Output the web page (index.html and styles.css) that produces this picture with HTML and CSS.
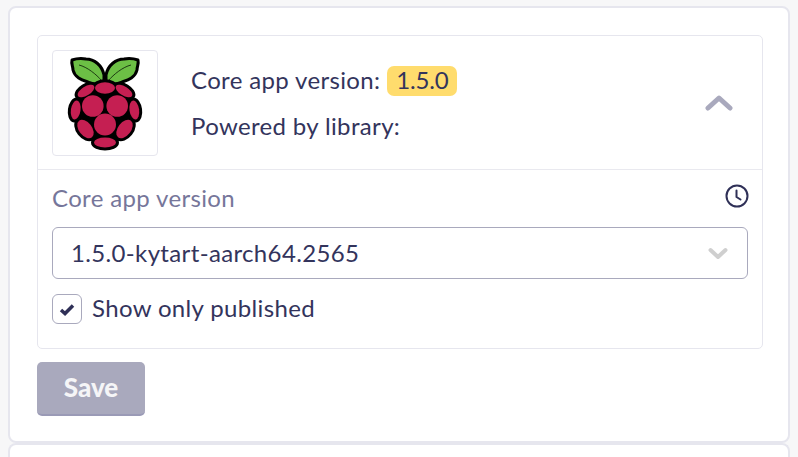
FILE: index.html
```html
<!DOCTYPE html>
<html lang="en">
<head>
<meta charset="utf-8">
<title>Core app version</title>
<link rel="stylesheet" href="styles.css">
</head>
<body>
<section class="card">
  <div class="panel">
    <div class="summary">
      <div class="logo">
        <svg width="104" height="104" viewBox="1 1 104 104" aria-hidden="true">
          <defs>
            <g id="berries">
              <ellipse cx="53" cy="38" rx="10" ry="5.700"/>
              <ellipse cx="34" cy="41" rx="9.500" ry="4.500" transform="rotate(-32 34 41)"/>
              <ellipse cx="72" cy="41" rx="9.500" ry="4.500" transform="rotate(32 72 41)"/>
              <circle cx="40.800" cy="56" r="10.800"/>
              <circle cx="65.200" cy="56" r="10.800"/>
              <ellipse cx="23.700" cy="60" rx="4.800" ry="9.500" transform="rotate(8 23.700 60)"/>
              <ellipse cx="82.300" cy="60" rx="4.800" ry="9.500" transform="rotate(-8 82.300 60)"/>
              <circle cx="53" cy="74.500" r="11"/>
              <ellipse cx="33.500" cy="79" rx="6.500" ry="10.500" transform="rotate(-38 33.500 79)"/>
              <ellipse cx="72.500" cy="79" rx="6.500" ry="10.500" transform="rotate(38 72.500 79)"/>
              <ellipse cx="53" cy="92.500" rx="11" ry="5"/>
            </g>
          </defs>
          <g stroke="#000" stroke-width="3" stroke-linejoin="round">
            <path class="leaf" d="M52 25C50 15 42 9 34 9C28 8 23 9 20 10C19 14 21 16 21 20C23 28 30 30 36 32C42 35 47 35 52 32Z"/>
            <path class="leaf" d="M54 25C56 15 64 9 72 9C78 8 83 9 86 10C87 14 85 16 85 20C83 28 76 30 70 32C64 35 59 35 54 32Z"/>
          </g>
          <path d="M27 15C35 17 44 24 50 31M79 15C71 17 62 24 56 31" stroke="#1d3a12" stroke-width="1" fill="none"/>
          <path d="M53 27L48 34H58Z" fill="#000"/>
          <path d="M53 32L74 38 85 60 74 84 53 96 32 84 21 60 32 38Z" fill="#000"/>
          <use href="#berries" class="berry-outline"/>
          <use href="#berries" class="berry"/>
        </svg>
      </div>
      <div class="facts">
        <p class="fact">Core app version: <span class="badge">1.5.0</span></p>
        <p class="fact">Powered by library:</p>
      </div>
      <svg class="collapse" width="30" height="18" viewBox="0 0 30 18" aria-hidden="true">
        <path d="M4 15L15 5 26 15" fill="none" stroke="#a9a9bd" stroke-width="5" stroke-linecap="round" stroke-linejoin="round"/>
      </svg>
    </div>
    <div class="details">
      <div class="label-row">
        <span class="label">Core app version</span>
        <svg class="clock" width="24" height="24" viewBox="0 0 24 24" aria-hidden="true">
          <circle cx="12" cy="12" r="10.500" fill="none" stroke="#2f3057" stroke-width="2"/>
          <path d="M11.500 6.500V13L15.500 15.500" fill="none" stroke="#2f3057" stroke-width="2" stroke-linecap="round" stroke-linejoin="round"/>
        </svg>
      </div>
      <div class="select">
        <span class="select-value">1.5.0-kytart-aarch64.2565</span>
        <svg width="20" height="13" viewBox="0 0 20 13" aria-hidden="true">
          <path d="M2.500 3L10 10 17.500 3" fill="none" stroke="#cfcfcf" stroke-width="4" stroke-linecap="round" stroke-linejoin="round"/>
        </svg>
      </div>
      <label class="check-row">
        <span class="checkbox">
          <svg width="16" height="13" viewBox="0 0 16 13" aria-hidden="true">
            <path d="M2 7L6 10.500 14 2.500" fill="none" stroke="#2f3057" stroke-width="3.500"/>
          </svg>
        </span>
        <span class="check-text">Show only published</span>
      </label>
    </div>
  </div>
  <button class="save" type="button">Save</button>
</section>
<div class="next-card"></div>
</body>
</html>
```

FILE: styles.css
```css
* { box-sizing: border-box; }
body {
  margin: 0;
  height: 457px;
  overflow: hidden;
  padding: 6px 8px 0;
  background: #f7f7f8;
  color: #33345c;
  font-family: Lato, "Open Sans", sans-serif;
  font-size: 24px;
  letter-spacing: 0.35px;
}
.card {
  height: 437px;
  padding: 27px 25px 0 27px;
  background: #fff;
  border: 2px solid #e6e6ee;
  border-radius: 8px;
}
.panel {
  height: 314px;
  border: 1px solid #e6e6ee;
  border-radius: 5px;
}
.summary {
  display: flex;
  align-items: center;
  height: 134px;
  padding: 14px 28px 13px 14px;
  border-bottom: 1px solid #e9e9ef;
}
.logo {
  width: 106px;
  height: 106px;
  border: 1px solid #e6e6ee;
  border-radius: 4px;
  flex: none;
}
.logo svg { display: block; }
.leaf { fill: #6cbf45; }
.berry { fill: #c51f52; }
.berry-outline { fill: #000; stroke: #000; stroke-width: 6; }
.facts { margin: -2px 0 0 33px; flex: 1; }
.fact { margin: 0; height: 46px; display: flex; align-items: center; gap: 7px; }
.badge {
  position: relative;
  top: 2px;
  padding: 0 9px;
  height: 30px;
  line-height: 28px;
  background: #ffdc6d;
  border-radius: 7px;
  letter-spacing: -0.2px;
}
.collapse { flex: none; margin-top: -3px; }
.details { padding: 14px 14px 0; }
.label-row { display: flex; justify-content: space-between; height: 43px; }
.label { color: #76769a; line-height: 28px; }
.clock { margin-right: -1px; }
.select {
  display: flex;
  align-items: center;
  justify-content: space-between;
  height: 52px;
  padding: 0 19px 0 18px;
  border: 1px solid #a9a9bd;
  border-radius: 6px;
}
.select-value { margin-top: -2px; }
.check-row { display: flex; align-items: center; gap: 10px; margin-top: 15px; }
.check-text { margin-top: -3px; }
.checkbox {
  display: flex;
  align-items: center;
  justify-content: center;
  width: 30px;
  height: 30px;
  border: 1px solid #a9a9bd;
  border-radius: 6px;
}
.save {
  display: block;
  width: 108px;
  height: 54px;
  margin-top: 13px;
  padding: 0 0 3px;
  border: 0;
  border-bottom: 2px solid #9a9ab6;
  border-radius: 5px;
  background: #a9a9bd;
  color: #f5f5f7;
  font: 900 26px Lato, "Open Sans", sans-serif;
}
.next-card {
  height: 14px;
  background: #fff;
  border: 2px solid #e6e6ee;
  border-bottom: 0;
  border-radius: 8px 8px 0 0;
}
```
